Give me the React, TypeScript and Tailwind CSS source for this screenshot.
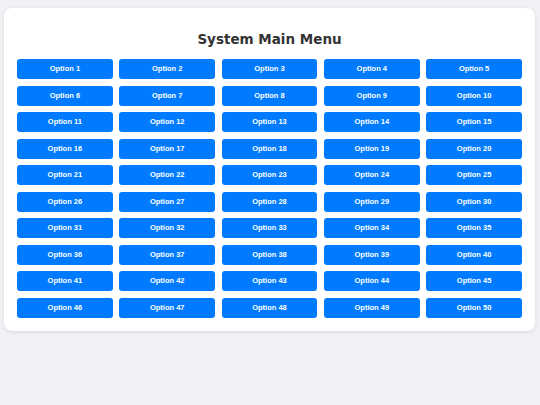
export default function App() {
  const options = Array.from({ length: 50 }, (_, i) => `Option ${i + 1}`)

  return (
    <div className="min-h-[405px] w-[540px] bg-[#f0f2f5] pt-2 pl-1 pr-[5px]">
      <div className="bg-white rounded-lg shadow-[0_1px_4px_rgba(0,0,0,0.1)] px-[13px] pt-[21px] pb-[13px]">
        <h1
          className="text-center text-[13.5px] leading-[20px] font-bold text-[#333] mb-[10px]"
          style={{ fontFamily: '"DejaVu Sans", Verdana, sans-serif' }}
        >
          System Main Menu
        </h1>
        <div className="grid grid-cols-5 gap-x-[6.5px] gap-y-[6.5px]">
          {options.map((o) => (
            <button
              key={o}
              className="h-[20px] rounded-[3px] bg-[#007bff] text-white text-[7.5px] font-bold flex items-center justify-center"
              style={{ fontFamily: '"Liberation Sans", Arial, sans-serif' }}
            >
              {o}
            </button>
          ))}
        </div>
      </div>
    </div>
  )
}
